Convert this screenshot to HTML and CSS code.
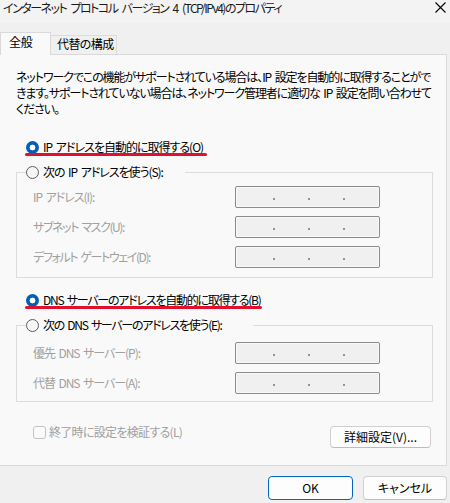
FILE: index.html
```html
<!DOCTYPE html>
<html lang="ja">
<head>
<meta charset="utf-8">
<title>インターネット プロトコル バージョン 4 (TCP/IPv4)のプロパティ</title>
<link rel="stylesheet" href="styles.css">
</head>
<body>
<div class="titlebar">
  <span class="title">インターネット プロトコル バージョン 4 (TCP/IPv4)のプロパティ</span>
  <svg class="close" width="11" height="11" viewBox="0 0 11 11"><path d="M0.5 0.5 L10.5 10.5 M10.5 0.5 L0.5 10.5" stroke="#000" stroke-width="1.1" fill="none"/></svg>
</div>
<div class="tabs">
  <div class="tab active">全般</div>
  <div class="tab">代替の構成</div>
</div>
<div class="panel">
  <p class="desc">ネットワークでこの機能がサポートされている場合は、IP 設定を自動的に取得することがで<br>きます。サポートされていない場合は、ネットワーク管理者に適切な IP 設定を問い合わせて<br>ください。</p>

  <div class="radio-row first mark mark-ip"><span class="radio on"></span>IP アドレスを自動的に取得する(O)</div>
  <fieldset class="group g1">
    <legend><span class="radio off"></span>次の IP アドレスを使う(S):</legend>
    <div class="field"><span class="lbl">IP アドレス(I):</span><span class="ipbox"><i></i><i></i><i></i></span></div>
    <div class="field"><span class="lbl wide">サブネット マスク(U):</span><span class="ipbox"><i></i><i></i><i></i></span></div>
    <div class="field"><span class="lbl wide">デフォルト ゲートウェイ(D):</span><span class="ipbox"><i></i><i></i><i></i></span></div>
  </fieldset>

  <div class="radio-row second mark mark-dns"><span class="radio on"></span>DNS サーバーのアドレスを自動的に取得する(B)</div>
  <fieldset class="group g2">
    <legend><span class="radio off"></span>次の DNS サーバーのアドレスを使う(E):</legend>
    <div class="field"><span class="lbl">優先 DNS サーバー(P):</span><span class="ipbox"><i></i><i></i><i></i></span></div>
    <div class="field"><span class="lbl">代替 DNS サーバー(A):</span><span class="ipbox"><i></i><i></i><i></i></span></div>
  </fieldset>

  <div class="footer">
    <div class="check-row"><span class="checkbox"></span>終了時に設定を検証する(L)</div>
    <div class="btn advanced">詳細設定(V)...</div>
  </div>
</div>
<div class="dialog-buttons">
  <div class="btn ok">OK</div>
  <div class="btn cancel">キャンセル</div>
</div>
</body>
</html>
```
FILE: styles.css
```css
* { box-sizing: border-box; }
html, body { margin: 0; padding: 0; }
body {
  width: 450px;
  height: 503px;
  overflow: hidden;
  background: #f0f0f0;
  font-family: "Noto Sans CJK JP", "Noto Sans", sans-serif;
  font-feature-settings: "palt";
  font-size: 12px;
  line-height: 16px;
  word-spacing: 2px;
  color: #000;
}

.titlebar {
  height: 23px;
  background: #f3f3f3;
  display: flex;
  justify-content: space-between;
  align-items: flex-start;
  padding: 0 4px 0 3px;
}
.title {
  line-height: 16px;
  color: #1a1a1a;
  letter-spacing: -1.5px;
  word-spacing: 3px;
  white-space: nowrap;
}
.close { margin-top: 2px; }

.tabs {
  display: flex;
  align-items: flex-end;
  height: 22px;
  margin-top: 9px;
}
.tab {
  width: 66px;
  height: 19px;
  border: 1px solid #dcdcdc;
  border-bottom: none;
  border-left: none;
  background: #f0f0f0;
  padding-left: 6px;
  white-space: nowrap;
  letter-spacing: -0.6px;
}
.tab.active {
  width: 51px;
  height: 23px;
  margin-bottom: -1px;
  background: #f9f9f9;
  border: 1px solid #d9d9d9;
  border-bottom: none;
  padding: 1px 0 0 8px;
  letter-spacing: -0.3px;
  position: relative;
  z-index: 1;
}

.panel {
  width: 447px;
  height: 412px;
  background: #f9f9f9;
  border: 1px solid #dadada;
  border-left: none;
  padding: 0 13px 0 16px;
}

.desc {
  margin: 14px 0 0 0;
  line-height: 16px;
  white-space: nowrap;
  letter-spacing: -1.1px;
}

.radio-row {
  display: flex;
  align-items: center;
  height: 16px;
  margin-left: 10px;
  position: relative;
  white-space: nowrap;
}
.radio-row.first { margin-top: 22px; letter-spacing: -1px; }
.radio-row.second { margin-top: 14px; letter-spacing: -1.25px; }

.radio {
  width: 13px;
  height: 13px;
  border-radius: 50%;
  margin-right: 4px;
  flex: none;
}
.radio.on { background: radial-gradient(circle, #fff 0 2.6px, #005fb8 3.2px); }
.radio.off { border: 1px solid #5d5d5d; background: #f6f6f6; }

.mark::after {
  content: "";
  position: absolute;
  left: -1px;
  top: 14px;
  height: 3px;
  border-radius: 2px;
  background: #e0112f;
}
.mark-ip::after { width: 182px; }
.mark-dns::after { width: 237px; }

.group {
  margin: 9px 0 0 0;
  border: 1px solid #dcdcdc;
  min-width: 0;
}
.group.g1 { padding: 6px 0 9px 9px; }
.group.g2 { padding: 9px 0 7px 9px; }
.group legend {
  display: flex;
  align-items: center;
  height: 16px;
  line-height: 16px;
  padding: 0 22px 0 0;
  white-space: nowrap;
}
.group.g1 legend { letter-spacing: -1.05px; }
.group.g2 legend { letter-spacing: -1.3px; padding-right: 32px; }

.field {
  display: flex;
  align-items: center;
  height: 22px;
  margin-left: 7px;
}
.field + .field { margin-top: 8px; }
.lbl {
  width: 202px;
  color: #a0a0a0;
  white-space: nowrap;
  letter-spacing: -1.05px;
}
.lbl.wide { letter-spacing: -1.4px; }
.ipbox {
  width: 145px;
  height: 22px;
  background: #f0f0f0;
  border: 1px solid #8a8a8a;
  border-radius: 2px;
  box-shadow: inset 0 0 0 1px #fafafa;
  display: flex;
  align-items: flex-end;
  gap: 33px;
  padding: 0 0 7px 37px;
}
.ipbox i {
  display: block;
  width: 2px;
  height: 2px;
  background: #8a93a8;
}

.footer {
  display: flex;
  justify-content: space-between;
  align-items: flex-start;
  margin-top: 22px;
  padding-left: 17px;
}
.check-row {
  display: flex;
  align-items: center;
  height: 16px;
  color: #a0a0a0;
  white-space: nowrap;
  letter-spacing: -0.7px;
}
.checkbox {
  width: 13px;
  height: 13px;
  border: 1px solid #c2c2c2;
  border-radius: 3px;
  background: #fbfbfb;
  margin-right: 3px;
}

.btn {
  display: flex;
  align-items: center;
  justify-content: center;
  background: #fdfdfd;
  border: 1px solid #d0d0d0;
  border-bottom-color: #bdbdbd;
  border-radius: 4px;
  white-space: nowrap;
}
.btn.advanced {
  width: 101px;
  height: 22px;
  margin-top: 2px;
  margin-right: 2px;
}

.dialog-buttons {
  display: flex;
  justify-content: flex-end;
  gap: 10px;
  margin-top: 10px;
  padding-right: 3px;
}
.btn.ok {
  width: 85px;
  height: 24px;
  border: 1px solid #0067c0;
}
.btn.cancel {
  width: 84px;
  height: 24px;
}
```
